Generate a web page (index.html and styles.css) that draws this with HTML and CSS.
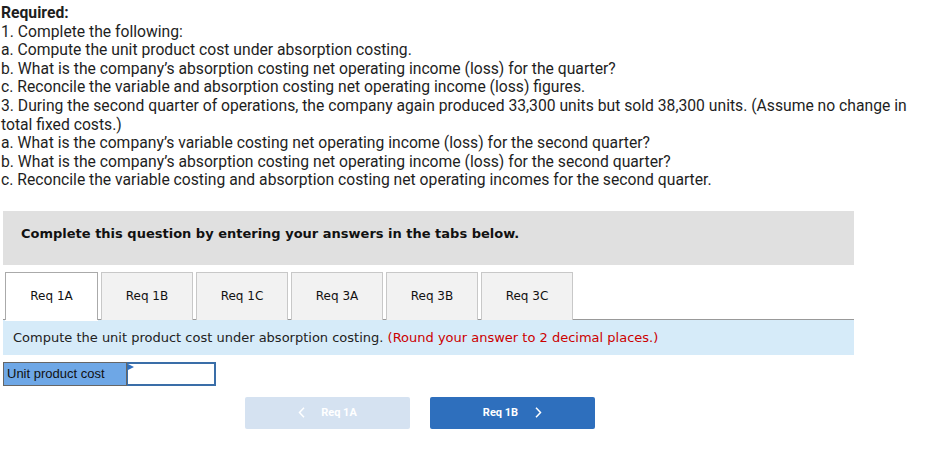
FILE: index.html
```html
<!DOCTYPE html>
<html>
<head>
<meta charset="utf-8">
<link rel="stylesheet" href="styles.css">
</head>
<body>
<div class="intro">
  <p class="req">Required:</p>
  <p>1. Complete the following:</p>
  <p>a. Compute the unit product cost under absorption costing.</p>
  <p>b. What is the company’s absorption costing net operating income (loss) for the quarter?</p>
  <p>c. Reconcile the variable and absorption costing net operating income (loss) figures.</p>
  <p>3. During the second quarter of operations, the company again produced 33,300 units but sold 38,300 units. (Assume no change in total fixed costs.)</p>
  <p>a. What is the company’s variable costing net operating income (loss) for the second quarter?</p>
  <p>b. What is the company’s absorption costing net operating income (loss) for the second quarter?</p>
  <p>c. Reconcile the variable costing and absorption costing net operating incomes for the second quarter.</p>
</div>

<div class="panel">
  <div class="banner">Complete this question by entering your answers in the tabs below.</div>
  <div class="tabs">
    <div class="tab active">Req 1A</div>
    <div class="tab">Req 1B</div>
    <div class="tab">Req 1C</div>
    <div class="tab">Req 3A</div>
    <div class="tab">Req 3B</div>
    <div class="tab">Req 3C</div>
  </div>
  <div class="info">Compute the unit product cost under absorption costing. <span class="red">(Round your answer to 2 decimal places.)</span></div>
  <div class="answer">
    <div class="label">Unit product cost</div>
    <div class="input"><span class="flag"></span></div>
  </div>
  <div class="nav">
    <div class="btn prev"><svg class="chev left" width="7" height="11" viewBox="0 0 7 11"><polyline points="6,0.8 1.5,5.5 6,10.2" fill="none" stroke="#fff" stroke-width="1.5"/></svg>Req 1A</div>
    <div class="btn next">Req 1B<svg class="chev right" width="7" height="11" viewBox="0 0 7 11"><polyline points="1,0.8 5.5,5.5 1,10.2" fill="none" stroke="#fff" stroke-width="1.5"/></svg></div>
  </div>
</div>
</body>
</html>
```
FILE: styles.css
```css
* { box-sizing: border-box; }
body {
  margin: 0;
  padding: 4px 0 0 1px;
  background: #fff;
  width: 931px;
}
.intro {
  font-family: "Roboto", "Liberation Sans", sans-serif;
  font-size: 15.7px;
  line-height: 18.6px;
  color: #1e1e1e;
}
.intro p { margin: 0; }
.intro .req { font-weight: bold; }

.panel {
  width: 851px;
  margin: 21px 0 0 2px;
  font-family: "DejaVu Sans", Verdana, sans-serif;
}
.banner {
  background: #e0e0e0;
  height: 54px;
  padding: 0 18px 8px;
  display: flex;
  align-items: center;
  font-weight: bold;
  font-size: 13px;
  color: #111;
}
.tabs {
  display: flex;
  gap: 3px;
  margin-top: 7px;
  padding-left: 2px;
  border-bottom: 1px solid #999;
  height: 48px;
}
.tab {
  width: 92px;
  height: 48px;
  border: 1px solid #c8c8c8;
  border-bottom: none;
  background: #f2f2f2;
  display: flex;
  align-items: center;
  justify-content: center;
  font-size: 12px;
  color: #111;
}
.tab.active {
  width: 93px;
  background: #fff;
  border-color: #aaa;
  position: relative;
  z-index: 1;
  box-shadow: 0 1px 0 #fff;
}
.info {
  background: #d6ebf9;
  height: 35px;
  display: flex;
  align-items: center;
  padding-left: 10px;
  font-size: 13px;
  color: #222;
  white-space: pre;
}
.red { color: #cc0000; }
.answer {
  display: flex;
  margin-top: 7px;
  height: 24px;
}
.label {
  width: 124px;
  background: #6ea7e6;
  border: 1px solid #666;
  font-family: "Liberation Sans", Arial, sans-serif;
  font-size: 13px;
  color: #111;
  padding-left: 3px;
  display: flex;
  align-items: center;
}
.input {
  width: 89px;
  border: 2px solid #3a6ea8;
  border-left-width: 1px;
  background: #fff;
  position: relative;
}
.flag {
  position: absolute;
  left: 0;
  top: 0;
  width: 0;
  height: 0;
  border-top: 3px solid transparent;
  border-bottom: 3px solid transparent;
  border-left: 6px solid #2f6fc0;
}
.nav {
  display: flex;
  gap: 20px;
  margin: 11px 0 0 242px;
}
.btn {
  width: 165px;
  height: 32px;
  border-radius: 2px;
  display: flex;
  align-items: center;
  justify-content: center;
  font-family: "Roboto", "Liberation Sans", sans-serif;
  font-weight: bold;
  font-size: 11px;
  color: #fff;
}
.btn.prev { background: #d5e2f1; }
.btn.next { background: #2e6fbd; }
.chev.left { margin-right: 16px; }
.chev.right { margin-left: 17px; }
```
